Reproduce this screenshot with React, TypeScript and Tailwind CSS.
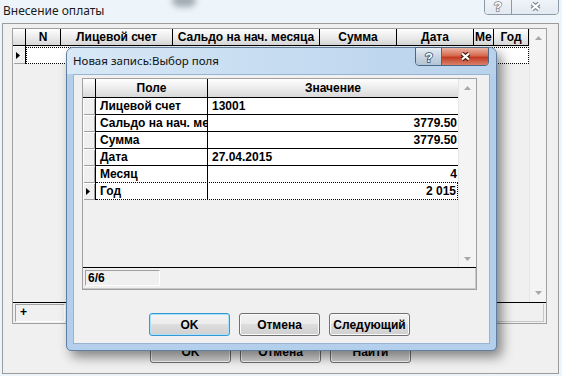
import React from "react";

type Row = { f: string; v: string; right?: boolean; cur?: boolean };

const rows: Row[] = [
  { f: "Лицевой счет", v: "13001" },
  { f: "Сальдо на нач. месяца", v: "3779.50", right: true },
  { f: "Сумма", v: "3779.50", right: true },
  { f: "Дата", v: "27.04.2015" },
  { f: "Месяц", v: "4", right: true },
  { f: "Год", v: "2 015", right: true, cur: true },
];

const outerCols = [
  { t: "N", w: "w-[35px]" },
  { t: "Лицевой счет", w: "w-[112px]" },
  { t: "Сальдо на нач. месяца", w: "w-[147px]" },
  { t: "Сумма", w: "w-[77px]" },
  { t: "Дата", w: "w-[77px]" },
  { t: "Ме", w: "w-[20px]", left: true },
  { t: "Год", w: "w-[35px]" },
];

function Arrow({ down }: { down?: boolean }) {
  return (
    <svg width="7" height="4" viewBox="0 0 7 4">
      <path d={down ? "M0 0H7L3.5 4Z" : "M0 4H7L3.5 0Z"} fill="#a8a8a8" />
    </svg>
  );
}

function Pointer() {
  return (
    <svg width="4" height="7" viewBox="0 0 4 7">
      <path d="M0 0L4 3.5L0 7Z" fill="#000" />
    </svg>
  );
}

function XGlyph({ dark, light }: { dark: string; light: string }) {
  return (
    <svg width="13" height="11" viewBox="0 0 13 11">
      <path d="M3 2.5L10 8.5M10 2.5L3 8.5" stroke={dark} strokeWidth="4.4" />
      <path d="M3 2.5L10 8.5M10 2.5L3 8.5" stroke={light} strokeWidth="2.2" />
    </svg>
  );
}

function QGlyph({ dark }: { dark: string }) {
  return (
    <svg width="10" height="14" viewBox="0 0 10 14">
      <text
        x="5"
        y="12"
        textAnchor="middle"
        fontSize="13"
        fontWeight="bold"
        fontFamily="Liberation Sans, Arial, sans-serif"
        fill="#fff"
        stroke={dark}
        strokeWidth="1.6"
        paintOrder="stroke"
      >
        ?
      </text>
    </svg>
  );
}

function Btn({ children, def }: { children: React.ReactNode; def?: boolean }) {
  return (
    <div
      className={
        def
          ? "w-[81px] h-[23px] rounded-[3px] border border-[#3597d3] shadow-[inset_0_0_0_1px_#a9e2fa] bg-[linear-gradient(#f4f4f4,#ececec_50%,#dedede_50%,#d0d0d0)] flex items-center justify-center text-[12px] font-bold"
          : "w-[81px] h-[23px] rounded-[3px] border border-[#707070] shadow-[inset_0_0_0_1px_#fbfbfb] bg-[linear-gradient(#f2f2f2,#ebebeb_50%,#dddddd_50%,#cfcfcf)] flex items-center justify-center text-[12px] font-bold"
      }
    >
      {children}
    </div>
  );
}

function OuterGrid() {
  return (
    <div className="ml-[9px] mt-[4px] w-[535px] h-[296px] border border-[#a0a0a0] flex flex-col bg-[#f0f0f0]">
      <div className="flex h-[273px]">
        <div className="w-[516px] flex flex-col">
          {/* header */}
          <div className="flex h-[17px] border-b border-black">
            <div className="w-[13px] border-r border-black bg-linear-to-b from-white to-[#d9d9d9]" />
            {outerCols.map((c) => (
              <div
                key={c.t}
                className={
                  c.left
                    ? `${c.w} border-r border-black bg-linear-to-b from-white to-[#d9d9d9] text-[12px] font-bold leading-[16px] pl-px overflow-hidden whitespace-nowrap`
                    : `${c.w} border-r border-black bg-linear-to-b from-white to-[#d9d9d9] text-[12px] font-bold leading-[16px] text-center overflow-hidden whitespace-nowrap`
                }
              >
                {c.t}
              </div>
            ))}
          </div>
          {/* current row */}
          <div className="flex h-[18px]">
            <div className="w-[13px] border-r border-black bg-[#f0f0f0] shadow-[inset_1px_1px_0_#fff,inset_0_-1px_0_#a0a0a0] flex items-center pl-[3px]">
              <Pointer />
            </div>
            <div className="flex-1 mt-px h-[17px] bg-white border border-dotted border-black" />
          </div>
        </div>
        <div className="flex-1 flex flex-col justify-between items-center bg-[#f4f4f4] border-l border-[#e6e6e6] pt-[7px] pb-[7px]">
          <Arrow />
          <Arrow down />
        </div>
      </div>
      <div className="h-px bg-black" />
      <div className="flex-1 flex px-[2px] pt-px pb-px">
        <div className="w-[50px] border-t border-l border-[#a0a0a0] border-r border-b border-r-white border-b-white text-[12px] font-bold leading-[14px] pl-[4px]">
          +
        </div>
        <div className="flex-1 border-r border-b border-[#c8c8c8]" />
      </div>
    </div>
  );
}

function DialogGrid() {
  return (
    <div className="ml-[8px] mt-[3px] w-[395px] h-[212px] border border-[#a0a0a0] flex flex-col">
      <div className="flex h-[188px]">
        <div className="w-[375px] flex flex-col">
          <div className="flex h-[19px] border-b border-black">
            <div className="w-[13px] border-r border-black bg-linear-to-b from-white to-[#d9d9d9]" />
            <div className="w-[112px] border-r border-black bg-linear-to-b from-white to-[#d9d9d9] text-[12px] font-bold leading-[18px] text-center">
              Поле
            </div>
            <div className="flex-1 bg-linear-to-b from-white to-[#d9d9d9] text-[12px] font-bold leading-[18px] text-center">
              Значение
            </div>
          </div>
          {rows.map((r, i) => {
            const nextCur = rows[i + 1]?.cur;
            return (
              <div key={r.f} className="flex h-[17px]">
                <div className="w-[13px] border-r border-black bg-[#f0f0f0] shadow-[inset_1px_1px_0_#fff,inset_-1px_-1px_0_#a0a0a0] flex items-center pl-[3px]">
                  {r.cur && <Pointer />}
                </div>
                <div
                  className={
                    r.cur
                      ? "flex flex-1 bg-white border-b border-r border-dotted border-black"
                      : nextCur
                      ? "flex flex-1 bg-white border-b border-dotted border-black"
                      : "flex flex-1 bg-white border-b border-black"
                  }
                >
                  <div className="w-[112px] border-r border-black pl-[4px] text-[12px] font-bold leading-[16px] overflow-hidden whitespace-nowrap">
                    {r.f}
                  </div>
                  <div
                    className={
                      r.right
                        ? "flex-1 pr-px text-right text-[12px] font-bold leading-[16px]"
                        : "flex-1 pl-[4px] text-[12px] font-bold leading-[16px]"
                    }
                  >
                    {r.v}
                  </div>
                </div>
              </div>
            );
          })}
        </div>
        <div className="flex-1 flex flex-col justify-between items-center bg-[#f4f4f4] border-l border-[#e6e6e6] pt-[7px] pb-[6px]">
          <Arrow />
          <Arrow down />
        </div>
      </div>
      <div className="h-px bg-black" />
      <div className="flex-1 flex pl-[2px] pt-[2px] pb-[2px] border-r border-b border-[#c8c8c8]">
        <div className="w-[75px] h-[16px] border-t border-l border-[#a0a0a0] border-r border-b border-r-white border-b-white text-[12px] font-bold leading-[14px] pl-[2px]">
          6/6
        </div>
      </div>
    </div>
  );
}

function Dialog() {
  return (
    <div className="absolute left-[66px] top-[47px] w-[431px] h-[304px] rounded-t-[7px] rounded-b-[5px] border border-[#5f7f9f] bg-[#b3cfeb] shadow-[5px_6px_12px_rgba(0,0,0,0.45)] flex flex-col px-[6px] pb-[6px]">
      <div className="h-[26px] -mx-[6px] px-[6px] flex justify-between items-start rounded-t-[6px] bg-linear-to-r from-[#d8e8f6] via-[#c6dcf1] to-[#b8d2ec]">
        <span className="pt-[5px] text-[11.5px] leading-[16px] font-['Noto_Sans',sans-serif] text-[#111]">
          Новая запись:Выбор поля
        </span>
        <div className="mt-[-1px] mr-px flex h-[19px] rounded-b-[4px] border border-[#4b6784] overflow-hidden">
          <div className="w-[26px] flex items-center justify-center border-r border-[#4b6784] bg-linear-to-b from-[#e6edf4] via-[#c9d6e3] to-[#b2c3d5]">
            <QGlyph dark="#3b4b5e" />
          </div>
          <div className="w-[46px] flex items-center justify-center bg-[linear-gradient(#eab3a4,#d8694f_45%,#c23b22_55%,#d9826b)]">
            <XGlyph dark="#4a1d12" light="#ffffff" />
          </div>
        </div>
      </div>
      <div className="flex-1 border border-[#97b4d2] bg-[#f0f0f0] flex flex-col">
        <DialogGrid />
        <div className="flex gap-[9px] ml-[75px] mt-[23px]">
          <Btn def>OK</Btn>
          <Btn>Отмена</Btn>
          <Btn>Следующий</Btn>
        </div>
      </div>
    </div>
  );
}

export default function App() {
  return (
    <div className="relative w-[562px] h-[376px] overflow-hidden bg-[#eef5fa] font-['Liberation_Sans',Arial,sans-serif] text-black">
      {/* blurred desktop behind the glass frame */}
      <div className="absolute left-[172px] top-[-6px] w-[24px] h-[13px] rounded-full bg-[#6f7a86] opacity-60 blur-[3px]" />

      <div className="flex h-[23px] justify-between items-start">
        <span className="pl-[3px] pt-[3px] text-[12px] leading-[16px] font-['Noto_Sans',sans-serif] text-[#1b1b1b]">
          Внесение оплаты
        </span>
        <div className="mt-[-5px] mr-[3px] flex h-[20px] rounded-b-[4px] border border-[#8c9aa8] overflow-hidden">
          <div className="w-[27px] flex items-end justify-center pb-px border-r border-[#8c9aa8] bg-linear-to-b from-[#f4f7fa] to-[#e2e9f0]">
            <QGlyph dark="#7f8a96" />
          </div>
          <div className="w-[46px] flex items-end justify-center pb-[2px] bg-linear-to-b from-[#f4f7fa] to-[#e2e9f0]">
            <XGlyph dark="#7f8a96" light="#ffffff" />
          </div>
        </div>
      </div>

      <div className="ml-[2px] w-[557px] h-[351px] border border-[#9c9c9c] bg-[#f0f0f0]">
        <OuterGrid />
        <div className="flex gap-[9px] ml-[147px] mt-[16px]">
          <Btn>OK</Btn>
          <Btn>Отмена</Btn>
          <Btn>Найти</Btn>
        </div>
      </div>

      <Dialog />
    </div>
  );
}
